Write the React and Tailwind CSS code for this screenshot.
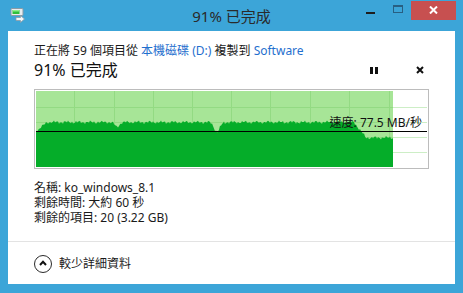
import { useMemo } from "react";

const FONT = { fontFamily: '"Noto Sans", "Noto Sans CJK TC", sans-serif' };

function profile(x) {
  let y = 31.2;
  if (x < 11) y = 40.7 - (x / 11) * 9.5;
  y += 4.6 * Math.exp(-((x - 81) ** 2) / 10);
  y += 9.6 * Math.exp(-((x - 181) ** 2) / 16);
  if (x > 318) y += Math.min(1, (x - 318) / 12) * 15.5;
  y += Math.sin(x * 1.7) * 0.8 + Math.sin(x * 0.53 + 1) * 0.7 + Math.sin(x * 3.1) * 0.5;
  return y;
}

function SpeedChart() {
  const area = useMemo(() => {
    const pts = ["M0,76", "L0,40.7"];
    for (let x = 1; x <= 357; x++) pts.push(`L${x},${profile(x).toFixed(1)}`);
    pts.push("L357,76 Z");
    return pts.join(" ");
  }, []);
  const cols = [38, 78, 117, 156, 195, 234, 274, 313, 353];
  const rows = [16, 31, 46, 61];

  return (
    <div className="w-[395px] h-[80px] border border-[#bcbcbc] bg-white p-px">
      <svg width="391" height="76" viewBox="0 0 391 76" className="block" shapeRendering="crispEdges">
        <rect x="0" y="0" width="357" height="76" fill="#a7e597" />
        {rows.map((r) => (
          <line key={`w${r}`} x1="357" x2="391" y1={r + 0.5} y2={r + 0.5} stroke="#cdeec6" />
        ))}
        {rows.map((r) => (
          <line key={`g${r}`} x1="0" x2="357" y1={r + 0.5} y2={r + 0.5} stroke="#93da83" />
        ))}
        {cols.map((c) => (
          <line key={c} x1={c + 0.5} x2={c + 0.5} y1="0" y2="76" stroke="#93da83" />
        ))}
        <path d={area} fill="#05ad29" shapeRendering="auto" />
        <line x1="0" x2="391" y1="40.5" y2="40.5" stroke="#000" />
        <text x="386" y="36" textAnchor="end" fontSize="12" fill="#111" style={FONT}>
          速度: 77.5 MB/秒
        </text>
      </svg>
    </div>
  );
}

function CopyIcon() {
  return (
    <svg width="16" height="16" viewBox="0 0 16 16" className="block">
      <rect x="1" y="1.5" width="12" height="7" rx="1" fill="#e8ecef" stroke="#8a9aa5" />
      <rect x="2.5" y="3" width="7" height="4" fill="#2fbf3a" />
      <rect x="2.5" y="3" width="7" height="1.5" fill="#8ef08a" />
      <path d="M6 10.5h4.5V8.5l4 3.5-4 3.5v-2H6z" fill="#f4f6f7" stroke="#8a9aa5" strokeWidth="0.8" />
    </svg>
  );
}

export default function App() {
  return (
    <div className="w-[463px] h-[293px] bg-[#3ca5d8] flex flex-col overflow-hidden" style={FONT}>
      {/* title bar */}
      <div className="h-[31px] grid grid-cols-[1fr_auto_1fr] shrink-0">
        <div className="pl-[10px] pt-[7px]">
          <CopyIcon />
        </div>
        <div className="text-[15px] leading-[31px] text-[#2a2a2a] pt-px">91% 已完成</div>
        <div className="flex justify-end items-start pt-px pr-[7px]">
          <div className="w-[27px] h-[19px] flex items-center justify-center">
            <div className="w-[9px] h-[2px] bg-[#1e1e1e] mt-[4px]" />
          </div>
          <div className="w-[27px] h-[19px] flex items-center justify-center">
            <div className="w-[10px] h-[8px] border border-t-2 border-[#285f82] -mt-[4px]" />
          </div>
          <div className="w-[45px] h-[19px] bg-[#c75050] flex items-center justify-center">
            <svg width="9" height="8" viewBox="0 0 9 8" className="block -mt-[1px]">
              <path d="M1 0.5L8 7.5M8 0.5L1 7.5" stroke="#fff" strokeWidth="2" />
            </svg>
          </div>
        </div>
      </div>

      {/* client area */}
      <div className="mx-2 mb-[9px] flex-1 bg-white flex flex-col">
        <div className="pl-[26px] pr-[27px]">
          <div className="mt-[12px] text-[12px] leading-[16px] text-[#1a1a1a]">
            正在將 59 個項目從 <span className="text-[#1f6fce]">本機磁碟 (D:)</span> 複製到{" "}
            <span className="text-[#1f6fce]">Software</span>
          </div>
          <div className="mt-px flex items-center h-[20px]">
            <div className="flex-1 text-[16px] leading-[20px] text-[#111]">91% 已完成</div>
            <div className="w-4 flex justify-center gap-[2px]">
              <div className="w-[3px] h-[7px] bg-[#111]" />
              <div className="w-[3px] h-[7px] bg-[#111]" />
            </div>
            <div className="w-4 ml-[30px] flex justify-center">
              <svg width="8" height="8" viewBox="0 0 8 8" className="block">
                <path d="M1 1L7 7M7 1L1 7" stroke="#111" strokeWidth="2" />
              </svg>
            </div>
          </div>
          <div className="mt-[9px]">
            <SpeedChart />
          </div>
          <div className="mt-[11px] text-[12px] leading-[15px] text-[#1a1a1a] flex flex-col">
            <span className="h-[15px]">名稱: ko_windows_8.1</span>
            <span className="h-[15px]">剩餘時間: 大約 60 秒</span>
            <span className="h-[15px]">剩餘的項目: 20 (3.22 GB)</span>
          </div>
        </div>
        <div className="mt-[16px] h-px bg-[#e3e3e3]" />
        <div className="flex-1 flex items-center pl-[26px] gap-[7px] pt-px">
          <div className="w-[18px] h-[18px] rounded-full border-[1.5px] border-[#2a2a2a] flex items-center justify-center">
            <svg width="8" height="6" viewBox="0 0 8 6" className="block -mt-px">
              <path d="M1 5L4 1.8L7 5" stroke="#111" strokeWidth="2" fill="none" />
            </svg>
          </div>
          <div className="text-[12px] leading-[16px] text-[#1a1a1a]">較少詳細資料</div>
        </div>
      </div>
    </div>
  );
}
